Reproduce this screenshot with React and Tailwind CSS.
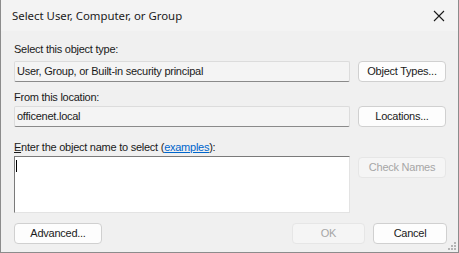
import React from "react";

const body = { fontFamily: '"Liberation Sans", Arial, sans-serif' };

function Btn({ children, disabled, className = "" }) {
  return (
    <div
      className={
        "flex items-center justify-center h-[21px] rounded-[4px] border text-[11px] tracking-[-0.25px] " +
        (disabled
          ? "bg-[#f5f5f5] border-[#e6e6e6] text-[#a6a6a6] "
          : "bg-[#fdfdfd] border-[#d0d0d0] text-[#1a1a1a] ") +
        className
      }
    >
      {children}
    </div>
  );
}

export default function App() {
  return (
    <div
      className="relative w-[459px] h-[253px] bg-[#f0f0f0] border-l border-r border-b border-[#8c8c8c] overflow-hidden"
      style={body}
    >
      <div className="flex items-center justify-between h-[31px] bg-[#f3f3f3] pl-[11px] pr-[12px]">
        <span className="text-[11.4px] text-[#1a1a1a]" style={{ fontFamily: '"Noto Sans", sans-serif' }}>
          Select User, Computer, or Group
        </span>
        <svg width="12" height="12" viewBox="0 0 12 12" className="mr-[1px]">
          <path d="M1 1 L11 11 M11 1 L1 11" stroke="#1a1a1a" strokeWidth="1.1" />
        </svg>
      </div>
      <div className="pl-[13px] pr-[11px] text-[11px] tracking-[-0.25px] text-[#1a1a1a]">
        <div className="mt-[12px] h-[13px] leading-[13px]">Select this object type:</div>
        <div className="mt-[5px] grid grid-cols-[336px_88px] gap-x-[8px]">
          <div className="h-[21px] flex items-center px-[2px] bg-[#f4f4f4] border border-[#dcdcdc] border-b-[#8a8a8a] rounded-[2px]">
            User, Group, or Built-in security principal
          </div>
          <Btn>Object Types...</Btn>
        </div>
        <div className="mt-[9px] h-[13px] leading-[13px]">From this location:</div>
        <div className="mt-[2px] grid grid-cols-[336px_88px] gap-x-[8px]">
          <div className="h-[21px] flex items-center px-[2px] bg-[#f4f4f4] border border-[#dcdcdc] border-b-[#8a8a8a] rounded-[2px]">
            officenet.local
          </div>
          <Btn>Locations...</Btn>
        </div>
        <div className="mt-[14px] h-[13px] leading-[13px]">
          <span className="underline">E</span>nter the object name to select (
          <span className="text-[#0066cc] underline">examples</span>):
        </div>
        <div className="mt-[2px] grid grid-cols-[336px_88px] gap-x-[8px] items-start">
          <div className="h-[57px] bg-white border border-[#e3e3e3] border-t-[#7a7a7a] border-l-[#7a7a7a] pt-[3px] pl-[1px]">
            <div className="w-[1px] h-[12px] bg-black" />
          </div>
          <Btn disabled className="mt-[1px]">Check Names</Btn>
        </div>
        <div className="mt-[10px] flex items-center">
          <Btn className="w-[88px]">Advanced...</Btn>
          <div className="flex-1" />
          <Btn disabled className="w-[73px]">OK</Btn>
          <Btn className="w-[74px] ml-[8px]">Cancel</Btn>
        </div>
      </div>
      <svg width="10" height="10" viewBox="0 0 10 10" className="absolute right-[1px] bottom-[1px]">
        {[
          [7, 1],
          [4, 4],
          [7, 4],
          [1, 7],
          [4, 7],
          [7, 7],
        ].map(([x, y], i) => (
          <rect key={i} x={x} y={y} width="2" height="2" fill="#b5b5b5" />
        ))}
      </svg>
    </div>
  );
}
